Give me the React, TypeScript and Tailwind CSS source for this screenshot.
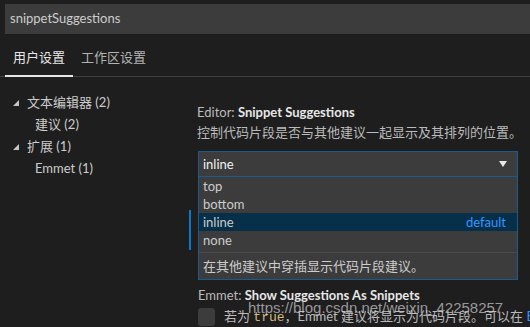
import React from "react";

const font = { fontFamily: 'Lato, "Noto Sans CJK SC", sans-serif' };

function TreeItem({ label, count, indent, expanded }: { label: string; count: number; indent?: boolean; expanded?: boolean }) {
  return (
    <div className={`h-[22px] flex items-center ${indent ? "pl-[35px]" : "pl-[13px]"}`}>
      {expanded && (
        <svg width="6" height="6" viewBox="0 0 6 6" className="mr-[8px] fill-[#c5c5c5]">
          <path d="M6 0 L6 6 L0 6 Z" />
        </svg>
      )}
      <span>
        {label} ({count})
      </span>
    </div>
  );
}

export default function App() {
  const options = ["top", "bottom", "inline", "none"];
  return (
    <div
      className="relative w-[530px] h-[327px] overflow-hidden bg-[#1e1e1e] text-[13px] text-[#cccccc]"
      style={font}
    >
      {/* search box */}
      <div className="mt-[4px] ml-[5px] h-[30px] bg-[#3c3c3c] flex items-center pl-[5px] text-[#cccccc]">
        snippetSuggestions
      </div>

      {/* tabs */}
      <div className="h-[43px] flex items-end pl-[5px] border-b border-[#3f3f3f]">
        <div className="relative px-[8px] pb-[9px] text-[#e7e7e7]">
          用户设置
          <div className="absolute left-0 right-0 bottom-[-1px] h-[2px] bg-[#e7e7e7]" />
        </div>
        <div className="px-[8px] pb-[9px] text-[#b4b4b4]">工作区设置</div>
      </div>

      <div className="flex">
        {/* tree */}
        <div className="w-[189px] shrink-0 pt-[15px]">
          <TreeItem label="文本编辑器" count={2} expanded />
          <TreeItem label="建议" count={2} indent />
          <TreeItem label="扩展" count={1} expanded />
          <TreeItem label="Emmet" count={1} indent />
        </div>

        {/* settings */}
        <div className="relative flex-1 min-w-0 pl-[8px] pt-[25px]">
          <div className="absolute left-0 top-[133px] w-[2px] h-[40px] bg-[#007acc]" />

          <div className="h-[20px] flex items-center pt-[1px]">
            <span className="text-[#bbbbbb]">Editor:&nbsp;</span>
            <span className="font-bold text-[#e7e7e7]">Snippet Suggestions</span>
          </div>
          <div className="h-[20px] flex items-center pt-[1px] text-[#bbbbbb] whitespace-nowrap">
            控制代码片段是否与其他建议一起显示及其排列的位置。
          </div>

          <div className="mt-[9px] w-[320px] ml-[1px] border border-[#1b5a8a] bg-[#3c3c3c]">
            <div className="h-[25px] flex items-center justify-between pl-[4px] pr-[10px] pt-[2px] border-b border-[#1b5a8a] text-[#f0f0f0]">
              <span>inline</span>
              <svg width="8" height="6" viewBox="0 0 8 6" className="fill-[#e8e8e8] -mt-[2px]">
                <path d="M0 0 L8 0 L4 6 Z" />
              </svg>
            </div>
            <div className="pb-[3px]">
              {options.map((o) => (
                <div
                  key={o}
                  className={`h-[18px] flex items-center justify-between pl-[4px] pr-[11px] pt-[2px] ${
                    o === "inline" ? "bg-[#062f4a] text-[#cccccc]" : "text-[#cccccc]"
                  }`}
                >
                  <span>{o}</span>
                  {o === "inline" && <span className="text-[#3794ff]">default</span>}
                </div>
              ))}
            </div>
            <div className="h-[27px] flex items-center pl-[4px] pt-[1px] border-t border-[#4a4a4a] text-[#cccccc]">
              在其他建议中穿插显示代码片段建议。
            </div>
          </div>

          <div className="mt-[6px] h-[18px] flex items-center ml-[1px] pt-[1px]">
            <span className="text-[#bbbbbb]">Emmet:&nbsp;</span>
            <span className="font-bold text-[#e7e7e7]">Show Suggestions As Snippets</span>
          </div>
          <div className="mt-[2px] ml-[1px] flex items-center">
            <div className="w-[17px] h-[18px] shrink-0 rounded-[3px] bg-[#3c3c3c]" />
            <div className="ml-[9px] whitespace-nowrap text-[#bbbbbb] pt-[1px]">
              若为{" "}
              <span className="text-[#d7ba7d]" style={{ fontFamily: '"Liberation Mono", monospace' }}>
                true
              </span>
              ，Emmet 建议将显示为代码片段。可以在 <span className="text-[#3794ff]">E</span>
            </div>
          </div>
        </div>
      </div>

      {/* watermark */}
      <div className="absolute left-[248px] top-[299px] text-[15px] leading-[18px] text-[#d0d0d0]/70 whitespace-nowrap pointer-events-none" style={{ fontFamily: '"Liberation Sans", sans-serif' }}>
        https://blog.csdn.net/weixin_42258257
      </div>
    </div>
  );
}
